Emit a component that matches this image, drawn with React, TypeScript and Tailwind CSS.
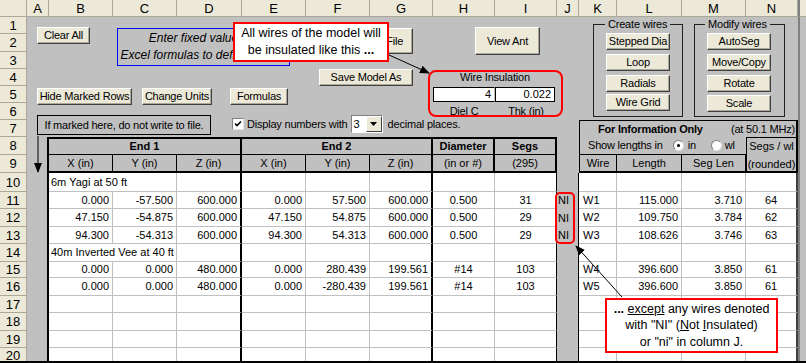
import React from "react";

const COLHEAD =
  "bg-[#ece9d8] border-r border-b border-[#aca899] flex items-center justify-center text-[13px] leading-none";
const ROWHEAD =
  "bg-[#ece9d8] border-r border-b border-[#aca899] flex items-center justify-center text-[13px] leading-none";
const EDGE = "bg-[#c0c0c0] border-l-2 border-l-[#808080]";
const COL_A = "bg-[#c0c0c0] border-r-2 border-r-black";

const letters = ["A", "B", "C", "D", "E", "F", "G", "H", "I", "J", "K", "L", "M", "N"];

// B..I : alignment + right border of each column in the data block
const valueCols = [
  "justify-end border-r border-r-[#c0c0c0]",
  "justify-end border-r border-r-[#c0c0c0]",
  "justify-end border-r-2 border-r-black",
  "justify-end border-r border-r-[#c0c0c0]",
  "justify-end border-r border-r-[#c0c0c0]",
  "justify-end border-r-2 border-r-black",
  "justify-center border-r border-r-[#c0c0c0]",
  "justify-center border-r border-r-black",
];

// K..N
const infoCols = [
  "justify-start pl-[4px] border-r border-r-[#c0c0c0]",
  "justify-end pr-[3px] border-r border-r-[#c0c0c0]",
  "justify-end pr-[3px] border-r border-r-[#c0c0c0]",
  "justify-center border-r-2 border-r-[#404040]",
];

type DataRow = { label?: string; v?: string[]; ni?: boolean; w?: string[] };

const rows: DataRow[] = [
  { label: "6m Yagi at 50 ft" },
  {
    v: ["0.000", "-57.500", "600.000", "0.000", "57.500", "600.000", "0.500", "31"],
    ni: true,
    w: ["W1", "115.000", "3.710", "64"],
  },
  {
    v: ["47.150", "-54.875", "600.000", "47.150", "54.875", "600.000", "0.500", "29"],
    ni: true,
    w: ["W2", "109.750", "3.784", "62"],
  },
  {
    v: ["94.300", "-54.313", "600.000", "94.300", "54.313", "600.000", "0.500", "29"],
    ni: true,
    w: ["W3", "108.626", "3.746", "63"],
  },
  { label: "40m Inverted Vee at 40 ft" },
  {
    v: ["0.000", "0.000", "480.000", "0.000", "280.439", "199.561", "#14", "103"],
    w: ["W4", "396.600", "3.850", "61"],
  },
  {
    v: ["0.000", "0.000", "480.000", "0.000", "-280.439", "199.561", "#14", "103"],
    w: ["W5", "396.600", "3.850", "61"],
  },
  {},
  {},
  {},
  {},
];

const Btn = ({ className, children }: { className: string; children: React.ReactNode }) => (
  <button
    type="button"
    className={`absolute flex items-center justify-center bg-[#ece9d8] border border-t-white border-l-white border-r-[#404040] border-b-[#404040] shadow-[inset_-1px_-1px_0_#aca899] text-[11px] tracking-[-0.2px] leading-none whitespace-nowrap overflow-hidden ${className}`}
  >
    {children}
  </button>
);

const Radio = ({ on }: { on?: boolean }) => (
  <span className="w-[11px] h-[11px] rounded-full bg-white border border-t-[#808080] border-l-[#808080] border-r-[#e0e0e0] border-b-[#e0e0e0] flex items-center justify-center">
    {on && <span className="w-[3px] h-[3px] rounded-full bg-black" />}
  </span>
);

export default function App() {
  return (
    <div className="relative w-[806px] h-[363px] overflow-hidden bg-[#c0c0c0] font-['Liberation_Sans',Arial,sans-serif] text-black">
      <div className="grid grid-cols-[27px_22px_64px_64px_65px_64px_64px_63px_62px_62px_22px_38px_65px_64px_52px_8px] grid-rows-[17px_17px_18px_17px_17px_17px_17px_17px_18px_18px_19px_17px_18px_17px_18px_16px_18px_17px_18px_17px_15px]">
        {/* column header */}
        <div className="bg-[#ece9d8] border-r border-b border-[#aca899]" />
        {letters.map((l) => (
          <div key={l} className={COLHEAD}>
            {l}
          </div>
        ))}
        <div className="bg-[#ece9d8] border-b border-[#aca899] border-l-2 border-l-[#808080]" />

        {/* rows 1-3 */}
        {[1, 2, 3].map((n) => (
          <React.Fragment key={n}>
            <div className={ROWHEAD}>{n}</div>
            <div className="col-span-14" />
            <div className={EDGE} />
          </React.Fragment>
        ))}

        {/* row 4 */}
        <div className={ROWHEAD}>4</div>
        <div className="col-span-7" />
        <div className="col-span-2 flex items-center justify-center text-[11px] tracking-[-0.2px]">
          Wire Insulation
        </div>
        <div className="col-span-5" />
        <div className={EDGE} />

        {/* row 5 */}
        <div className={ROWHEAD}>5</div>
        <div className="col-span-7" />
        <div className="bg-white border-t border-b border-l border-black border-r border-r-[#c0c0c0] my-px flex items-center justify-end pr-[3px] text-[11px]">
          4
        </div>
        <div className="bg-white border border-black mr-[2px] my-px flex items-center justify-end pr-[3px] text-[11px]">
          0.022
        </div>
        <div className="col-span-5" />
        <div className={EDGE} />

        {/* row 6 */}
        <div className={ROWHEAD}>6</div>
        <div className="col-span-7" />
        <div className="flex items-center justify-center text-[11px] tracking-[-0.2px]">Diel C</div>
        <div className="flex items-center justify-center text-[11px] tracking-[-0.2px]">Thk (in)</div>
        <div className="col-span-5" />
        <div className={EDGE} />

        {/* row 7 */}
        <div className={ROWHEAD}>7</div>
        <div className="col-span-10" />
        <div className="col-span-4 border-t border-l border-r-2 border-black flex items-center text-[11px] tracking-[-0.2px]">
          <span className="pl-[18px] font-bold">For Information Only</span>
          <span className="ml-auto pr-[1px]">(at 50.1 MHz)</span>
        </div>
        <div className={EDGE} />

        {/* row 8 */}
        <div className={ROWHEAD}>8</div>
        <div className={COL_A} />
        <div className="col-span-3 border-t-2 border-b border-r-2 border-black flex items-center justify-center font-bold text-[11px]">
          End 1
        </div>
        <div className="col-span-3 border-t-2 border-b border-r-2 border-black flex items-center justify-center font-bold text-[11px]">
          End 2
        </div>
        <div className="border-t-2 border-b border-r-2 border-black flex items-center justify-center font-bold text-[11px]">
          Diameter
        </div>
        <div className="border-t-2 border-b border-r-2 border-black flex items-center justify-center font-bold text-[11px]">
          Segs
        </div>
        <div />
        <div className="col-span-3 border-l border-b border-black flex items-center pl-[8px] text-[11px] tracking-[-0.2px]">
          <span>Show lengths in</span>
          <span className="ml-[10px]">
            <Radio on />
          </span>
          <span className="ml-[4px]">in</span>
          <span className="ml-[15px]">
            <Radio />
          </span>
          <span className="ml-[3px]">wl</span>
        </div>
        <div className="row-span-2 border-t border-l border-r-2 border-b-2 border-black flex flex-col items-center justify-center gap-[4px] text-[11px] leading-[14px]">
          <span>Segs / wl</span>
          <span>(rounded)</span>
        </div>
        <div className={EDGE} />

        {/* row 9 */}
        <div className={ROWHEAD}>9</div>
        <div className={COL_A} />
        {["X (in)", "Y (in)", "Z (in)", "X (in)", "Y (in)", "Z (in)", "(in or #)", "(295)"].map((t, i) => (
          <div
            key={i}
            className={`border-b-2 border-black flex items-center justify-center text-[11px] ${
              i === 2 || i === 5 || i === 6 || i === 7 ? "border-r-2" : "border-r"
            }`}
          >
            {t}
          </div>
        ))}
        <div />
        <div className="border-b-2 border-r border-l border-black flex items-center justify-center text-[11px]">
          Wire
        </div>
        <div className="border-b-2 border-r border-black flex items-center justify-center text-[11px]">Length</div>
        <div className="border-b-2 border-r border-black flex items-center justify-center text-[11px]">Seg Len</div>
        <div className={EDGE} />

        {/* rows 10-20 */}
        {rows.map((r, ri) => (
          <React.Fragment key={ri}>
            <div className={ROWHEAD}>{ri + 10}</div>
            <div className={COL_A} />
            {r.label ? (
              <>
                <div className="col-span-2 bg-white border-b border-b-[#c0c0c0] border-r border-r-[#c0c0c0] flex items-center pl-[2px] text-[11px] whitespace-nowrap">
                  {r.label}
                </div>
                {valueCols.slice(2).map((c, i) => (
                  <div key={i} className={`bg-white border-b border-b-[#c0c0c0] ${c}`} />
                ))}
              </>
            ) : (
              valueCols.map((c, i) => (
                <div
                  key={i}
                  className={`bg-white border-b border-b-[#c0c0c0] flex items-center px-[3px] text-[11px] whitespace-nowrap ${c}`}
                >
                  {r.v?.[i]}
                </div>
              ))
            )}
            <div className="bg-[#c0c0c0] border-r border-r-black flex items-center pl-[1px] text-[11px]">
              {r.ni ? "NI" : ""}
            </div>
            {infoCols.map((c, i) => (
              <div
                key={i}
                className={`bg-white border-b border-b-[#c0c0c0] flex items-center text-[11px] whitespace-nowrap ${c}`}
              >
                {r.w?.[i]}
              </div>
            ))}
            <div className={EDGE} />
          </React.Fragment>
        ))}
      </div>
      <div className="absolute left-0 right-0 bottom-0 h-[2px] bg-black" />

      {/* floating sheet objects */}
      <Btn className="left-[37px] top-[27px] w-[53px] h-[17px]">Clear All</Btn>

      <div className="absolute left-[117px] top-[28px] w-[173px] h-[38px] border border-[#0000ff] flex flex-col items-center justify-center italic text-[12px] leading-[17px] whitespace-nowrap">
        <span>Enter fixed values or</span>
        <span>Excel formulas to define values</span>
      </div>

      <Btn className="left-[318px] top-[28px] w-[95px] h-[26px]">Load Model File</Btn>

      <div className="absolute left-[233px] top-[22px] w-[156px] h-[40px] bg-white border-2 border-[#ff0000] flex flex-col items-center justify-center text-[12.5px] leading-[17px] whitespace-nowrap">
        <span>All wires of the model will</span>
        <span>
          be insulated like this <b>...</b>
        </span>
      </div>

      <Btn className="left-[319px] top-[69px] w-[94px] h-[17px]">Save Model As</Btn>
      <Btn className="left-[475px] top-[27px] w-[65px] h-[28px]">View Ant</Btn>

      <div className="absolute left-[428px] top-[70px] w-[135px] h-[47px] border-2 border-[#ff0000] rounded-[8px]" />

      {/* Create wires */}
      <div className="absolute left-[593px] top-[24px] w-[90px] h-[93px] border border-[#202020]">
        <span className="absolute left-[11px] -top-[8px] px-[3px] bg-[#c0c0c0] text-[11px] tracking-[-0.2px] leading-[14px]">
          Create wires
        </span>
        <Btn className="left-[12px] top-[8px] w-[64px] h-[17px]">Stepped Dia</Btn>
        <Btn className="left-[12px] top-[29px] w-[64px] h-[17px]">Loop</Btn>
        <Btn className="left-[12px] top-[50px] w-[64px] h-[17px]">Radials</Btn>
        <Btn className="left-[12px] top-[69px] w-[64px] h-[17px]">Wire Grid</Btn>
      </div>

      {/* Modify wires */}
      <div className="absolute left-[694px] top-[24px] w-[91px] h-[93px] border border-[#202020]">
        <span className="absolute left-[10px] -top-[8px] px-[3px] bg-[#c0c0c0] text-[11px] tracking-[-0.2px] leading-[14px]">
          Modify wires
        </span>
        <Btn className="left-[12px] top-[8px] w-[64px] h-[17px]">AutoSeg</Btn>
        <Btn className="left-[12px] top-[29px] w-[64px] h-[17px]">Move/Copy</Btn>
        <Btn className="left-[12px] top-[50px] w-[64px] h-[17px]">Rotate</Btn>
        <Btn className="left-[12px] top-[70px] w-[64px] h-[17px]">Scale</Btn>
      </div>

      <Btn className="left-[37px] top-[88px] w-[95px] h-[17px]">Hide Marked Rows</Btn>
      <Btn className="left-[142px] top-[88px] w-[70px] h-[17px]">Change Units</Btn>
      <Btn className="left-[230px] top-[88px] w-[58px] h-[17px]">Formulas</Btn>

      <div className="absolute left-[37px] top-[115px] w-[174px] h-[20px] border border-black flex items-center justify-center text-[11px] tracking-[-0.2px]">
        If marked here, do not write to file.
      </div>

      <div className="absolute left-[232px] top-[115px] h-[18px] flex items-center text-[11px] tracking-[-0.2px]">
        <span className="w-[12px] h-[12px] bg-white border border-t-[#808080] border-l-[#808080] border-r-[#e0e0e0] border-b-[#e0e0e0] flex items-center justify-center">
          <svg width="8" height="8" viewBox="0 0 8 8">
            <path d="M1 3.5 L3 5.5 L7 1.5" stroke="black" strokeWidth="1.6" fill="none" />
          </svg>
        </span>
        <span className="ml-[3px]">Display numbers with</span>
        <span className="ml-[3px] w-[32px] h-[18px] bg-white border border-t-[#808080] border-l-[#808080] border-r-white border-b-white flex items-center">
          <span className="pl-[2px] flex-1">3</span>
          <span className="w-[16px] h-[16px] bg-[#ece9d8] border border-t-white border-l-white border-r-[#404040] border-b-[#404040] flex items-center justify-center">
            <svg width="7" height="4" viewBox="0 0 7 4">
              <path d="M0 0 H7 L3.5 4 Z" fill="black" />
            </svg>
          </span>
        </span>
        <span className="ml-[5px]">decimal places.</span>
      </div>

      <div className="absolute left-[555px] top-[192px] w-[20px] h-[52px] border-2 border-[#ff0000] rounded-[5px]" />

      <div className="absolute left-[605px] top-[298px] w-[173px] h-[55px] bg-white border-2 border-[#ff0000] flex flex-col items-center justify-center text-[12.5px] leading-[16.5px] whitespace-nowrap">
        <span>
          <b>...</b> <u>except</u> any wires denoted
        </span>
        <span>
          with "NI" (<u>N</u>ot <u>I</u>nsulated)
        </span>
        <span>or "ni" in column J.</span>
      </div>

      {/* arrows */}
      <svg className="absolute left-0 top-0 pointer-events-none" width="806" height="363" viewBox="0 0 806 363">
        <defs>
          <marker id="ah" markerWidth="10" markerHeight="8" refX="9" refY="4" orient="auto" markerUnits="userSpaceOnUse">
            <path d="M0 0 L10 4 L0 8 Z" fill="black" />
          </marker>
        </defs>
        <line x1="389" y1="55" x2="429" y2="73" stroke="black" strokeWidth="1" markerEnd="url(#ah)" />
        <line x1="38" y1="136" x2="38" y2="172" stroke="black" strokeWidth="1" markerEnd="url(#ah)" />
        <line x1="622" y1="297" x2="576" y2="246" stroke="black" strokeWidth="1" markerEnd="url(#ah)" />
      </svg>
    </div>
  );
}
